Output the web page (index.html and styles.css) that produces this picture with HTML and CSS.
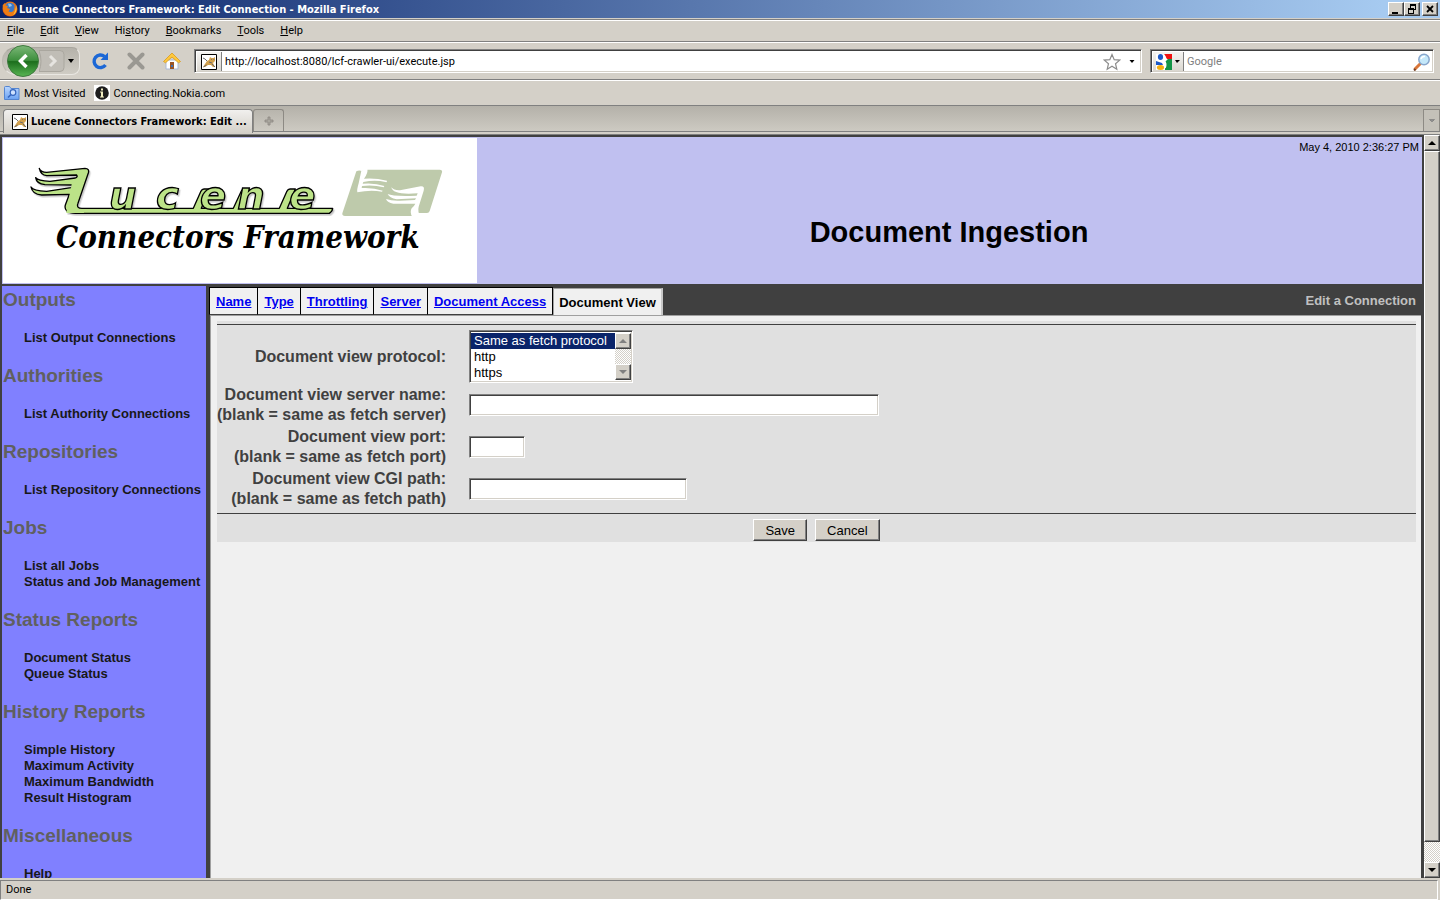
FILE: index.html
```html
<!DOCTYPE html>
<html lang="en">
<head>
<meta charset="utf-8">
<title>Lucene Connectors Framework: Edit Connection</title>
<link rel="stylesheet" href="styles.css">
</head>
<body>
<svg class="defs" aria-hidden="true">
  <defs>
    <linearGradient id="green" x1="0" y1="0" x2="0" y2="1"><stop offset="0" stop-color="#7cb878"/><stop offset=".48" stop-color="#3d8f3d"/><stop offset=".52" stop-color="#1c6e1c"/><stop offset="1" stop-color="#58b553"/></linearGradient>
    <linearGradient id="folder" x1="0" y1="0" x2="0" y2="1"><stop offset="0" stop-color="#b9d6ff"/><stop offset="1" stop-color="#6ba2f2"/></linearGradient>
    <radialGradient id="fox" cx=".5" cy=".4" r=".6"><stop offset="0" stop-color="#ffb52e"/><stop offset="1" stop-color="#d1490a"/></radialGradient>
    <symbol id="cat" viewBox="0 0 16 16">
      <path d="M.5.5h15v15H.5z" fill="#fff" stroke="#000"/>
      <path d="M8 6l1-3 1.500 1h2L14 3v4l-2 2 2 4h-2l-2-2-3 0-3 2H2l2-3 2-3z" fill="#d2a04c"/>
      <path d="M2 4l2 1 2 2M10 5.500h.8M12.500 5.500h.8M8 8l3 1M2.500 13l3-2M11 10l3 3" stroke="#6a6a6a" fill="none"/>
    </symbol>
  </defs>
</svg>

<header class="titlebar">
  <svg class="ico" viewBox="0 0 16 16"><circle cx="8" cy="8" r="7.500" fill="url(#fox)"/><circle cx="8" cy="6.500" r="4.800" fill="#3c78c8"/><path d="M6 2.500l3 .5 1 2-3 1z" fill="#8fc6f0"/><path d="M.8 4l2-2 .5 2.500L6 5 5 7l3 1-1.500 2.500 3 1C12 11 13 8 12.500 5c3 3 2 8-1.500 9.500C6 16.500 0 13 .8 4z" fill="#ee7d14"/><path d="M14 4c1.500 4 .5 8-3 10 2-3 3-6 3-10z" fill="#ffc840"/></svg>
  <span class="title">Lucene Connectors Framework: Edit Connection - Mozilla Firefox</span>
  <div class="winbtns">
    <button class="raised" aria-label="Minimize"><svg viewBox="0 0 12 10"><path d="M2 8h6v2H2z"/></svg></button>
    <button class="raised" aria-label="Restore"><svg viewBox="0 0 12 10"><path d="M4 0h6v2H4zM4 2h1v2H4zM9 2h1v4H9zM8 5h1v1H8zM2 4h6v2H2zM2 6h1v4H2zM7 6h1v4H7zM3 9h4v1H3z"/></svg></button>
    <button class="raised close" aria-label="Close"><svg viewBox="0 0 12 10"><path d="M3 2l6 6M9 2l-6 6" stroke="#000" stroke-width="1.800"/></svg></button>
  </div>
</header>

<nav class="menubar">
  <button><u>F</u>ile</button><button><u>E</u>dit</button><button><u>V</u>iew</button><button>Hi<u>s</u>tory</button><button><u>B</u>ookmarks</button><button><u>T</u>ools</button><button><u>H</u>elp</button>
</nav>

<div class="navbar">
  <div class="pill">
    <button class="back" aria-label="Back"><svg viewBox="0 0 32 32"><circle cx="16" cy="16" r="15.500" fill="url(#green)" stroke="#3f7a3f"/><path d="M19.500 10l-6 6 6 6" fill="none" stroke="#fff" stroke-width="3.500"/></svg></button>
    <button class="fwd" aria-label="Forward"><svg viewBox="0 0 26 24"><path d="M0 1.500h21q4 0 4 4v13q0 4-4 4H0q4-10 0-21z" fill="#c0bdb6" stroke="#aaa79f"/><path d="M11 7l5 5-5 5" fill="none" stroke="#e6e4e0" stroke-width="3"/></svg></button>
    <button class="drop" aria-label="Recent pages"><svg viewBox="0 0 8 4"><path d="M1 0h6L4 4z"/></svg></button>
  </div>
  <button class="tool" aria-label="Reload"><svg viewBox="0 0 18 18"><path d="M14.500 13A6.300 6.300 0 1 1 13.500 4.500" fill="none" stroke="#1b67d6" stroke-width="3.400"/><path d="M9.500 8h7.500V.5z" fill="#1b67d6"/></svg></button>
  <button class="tool" aria-label="Stop"><svg viewBox="0 0 18 18"><path d="M2.500 2.500l13 13M15.500 2.500l-13 13" stroke="#9a9892" stroke-width="4" stroke-linecap="round"/></svg></button>
  <button class="tool" aria-label="Home"><svg viewBox="0 0 18 18"><path d="M3 8h12v9H3z" fill="#fff" stroke="#a9b9d8"/><path d="M7 10h4v7H7z" fill="#9a5526"/><path d="M8 13h2v2H8z" fill="#3a70bb"/><path d="M9 1l8.500 8.500-2 1.300L9 5l-6.500 5.800-2-1.300z" fill="#ffc83c" stroke="#d99a1c" stroke-width=".8"/></svg></button>
  <div class="field url">
    <span class="site"><svg viewBox="0 0 16 16"><use href="#cat"/></svg></span>
    <input type="text" aria-label="Address" value="http://localhost:8080/lcf-crawler-ui/execute.jsp">
    <svg class="star" viewBox="0 0 18 18"><path d="M9 1.500l2.200 5.200 5.500.4-4.200 3.600 1.300 5.500L9 13.300l-4.800 2.900 1.300-5.500L1.300 7.100l5.500-.4z" fill="#fff" stroke="#8c8c8c" stroke-width="1.200"/></svg>
    <button class="caret" aria-label="Show history"><svg viewBox="0 0 6 4"><path d="M.5 0h5L3 3z"/></svg></button>
  </div>
  <div class="field search">
    <button class="engine" aria-label="Search engine"><svg class="g" viewBox="0 0 16 16"><path d="M0 0h16v16H0z" fill="#fff"/><path d="M8 0h8v6l-5-1z" fill="#f01010"/><path d="M16 5v11H9V8l3-3z" fill="#129446"/><ellipse cx="4.500" cy="3" rx="2.600" ry="3" fill="#1b59c8"/><path d="M0 7l6 2 1 2H0z" fill="#1b59c8"/><ellipse cx="4.500" cy="13.500" rx="3.600" ry="2.500" fill="#f5b010"/><path d="M8 1q2 3 0 6 3 2 1 7" fill="none" stroke="#fff" stroke-width="1.500"/></svg><svg class="tri" viewBox="0 0 6 4"><path d="M1 0h5L3 3z"/></svg></button>
    <input type="text" aria-label="Search" placeholder="Google">
    <button class="go" aria-label="Search"><svg viewBox="0 0 18 18"><path d="M1.500 16.500l6-6" stroke="#d9763a" stroke-width="3"/><path d="M1 16l1.500 1.500" stroke="#704028" stroke-width="2"/><circle cx="11" cy="6.500" r="5.200" fill="#c4e8fa" stroke="#88a6cc" stroke-width="1.500"/><path d="M8 6q1-3 4-2.500" stroke="#fff" stroke-width="1.500" fill="none"/></svg></button>
  </div>
</div>

<div class="bookmarks">
  <a href="#"><svg viewBox="0 0 16 16"><path d="M.5 2.500q0-1 1-1h4l1.500 2h8v11H.5z" fill="url(#folder)" stroke="#5585cf"/><circle cx="9" cy="7.500" r="2.800" fill="#cfe2ff" stroke="#3565bd" stroke-width="1.200"/><path d="M7 9.500l-3 3" stroke="#3565bd" stroke-width="1.600"/></svg>Most Visited</a>
  <a href="#"><svg viewBox="0 0 16 16"><path d="M0 0h16v16H0z" fill="#fff"/><circle cx="8" cy="8" r="6.800" fill="#1d1d1d"/><path d="M7 3.500h2v2H7zM6 6.500h3v5h1v1H6v-1h1v-4H6z" fill="#f1eec0"/></svg>Connecting.Nokia.com</a>
</div>

<div class="tabstrip">
  <div class="tab"><svg viewBox="0 0 16 16"><use href="#cat"/></svg><span>Lucene Connectors Framework: Edit ...</span></div>
  <button class="newtab" aria-label="New tab"><svg viewBox="0 0 10 10"><path d="M4 1h2v3h3v2H6v3H4V6H1V4h3z" fill="#aaa79f" stroke="#8a8781" stroke-width=".8"/></svg></button>
  <button class="alltabs" aria-label="List all tabs"><svg viewBox="0 0 6 4"><path d="M0 .5h6M1 1h4L3 3z" fill="#999" stroke="#777" stroke-width=".6"/></svg></button>
</div>

<div class="viewport">
  <div class="page">
    <div class="banner">
      <svg class="logo" viewBox="9 24 1422 435" role="img" aria-label="Lucene Connectors Framework">
        <g class="ribbon">
          <path d="M118 116q4 10 22 11L255 115q14 1 10 14l-31 91q-6 15 12 15H580l22-50q4-8 10-8h16l-24 58h96l24-52q3-6 9-6h14l-24 58H838l22-50q4-8 10-8h16l-24 58H998q0 8-10 15H226q-36-2-30-25l12-32-83 2q-28-2-32-24q6 12 47 13l73-11q9-2 5-8l-83-1q-26-3-28-21q6 10 43 11l76-10q8-3 4-9l-90 2q-18-2-22-22z"/>
          <text class="word"><tspan class="initial" x="196" y="248">L</tspan><tspan y="238" x="327 468 600 712 868">ucene</tspan></text>
        </g>
        <path fill="#becaab" d="M1069 124q8-4 16-1l18-4h216q9 0 7 8l-37 116q-2 6-8 6h-26l-18 9h-202q-9 0-8-8z"/>
        <path fill="#fff" d="M1084 122L1102 116Q1105 128 1092 146Q1125 143 1161 152Q1161 158 1156 156Q1125 149 1090 156L1088 161Q1125 158 1153 168L1151 172Q1120 164 1086 168L1085 174Q1120 172 1148 182L1146 185Q1110 179 1072 187Q1070 180 1076 160Z"/>
        <path fill="#fff" d="M1174 172Q1182 182 1200 181L1262 169Q1275 168 1271 182L1256 230Q1252 246 1262 260L1237 260Q1228 248 1235 235Q1244 226 1246 221L1180 221Q1162 218 1158 207Q1175 213 1200 212L1245 210L1248 205L1190 208Q1168 204 1163 192Q1180 200 1250 197L1253 190Q1178 196 1174 172Z"/>
        <text class="sub" x="168" y="353">Connectors Framework</text>
      </svg>
      <div class="bannertext">
        <time>May 4, 2010 2:36:27 PM</time>
        <h1>Document Ingestion</h1>
      </div>
    </div>
    <div class="columns">
      <nav class="side">
        <h2>Outputs</h2>
        <ul><li><a href="#">List Output Connections</a></li></ul>
        <h2>Authorities</h2>
        <ul><li><a href="#">List Authority Connections</a></li></ul>
        <h2>Repositories</h2>
        <ul><li><a href="#">List Repository Connections</a></li></ul>
        <h2>Jobs</h2>
        <ul><li><a href="#">List all Jobs</a></li><li><a href="#">Status and Job Management</a></li></ul>
        <h2>Status Reports</h2>
        <ul><li><a href="#">Document Status</a></li><li><a href="#">Queue Status</a></li></ul>
        <h2>History Reports</h2>
        <ul><li><a href="#">Simple History</a></li><li><a href="#">Maximum Activity</a></li><li><a href="#">Maximum Bandwidth</a></li><li><a href="#">Result Histogram</a></li></ul>
        <h2>Miscellaneous</h2>
        <ul><li><a href="#">Help</a></li></ul>
      </nav>
      <main>
        <div class="pagetabs">
          <a href="#">Name</a><a href="#">Type</a><a href="#">Throttling</a><a href="#">Server</a><a href="#">Document Access</a><span class="current">Document View</span>
          <span class="heading">Edit a Connection</span>
        </div>
        <form class="body">
          <div class="panel">
            <table>
              <tr><th><label for="proto">Document view protocol:</label></th>
                <td><div class="sunken list"><select id="proto" size="3"><option selected>Same as fetch protocol</option><option>http</option><option>https</option></select>
                  <div class="minibar"><span class="raised"><svg viewBox="0 0 8 4"><path d="M4 0l4 4H0z" fill="#808080"/></svg></span><span class="raised"><svg viewBox="0 0 8 4"><path d="M0 0h8L4 4z" fill="#808080"/></svg></span></div></div></td></tr>
              <tr><th><label for="srv">Document view server name:<br>(blank = same as fetch server)</label></th><td><input class="sunken long" id="srv" type="text"></td></tr>
              <tr><th><label for="port">Document view port:<br>(blank = same as fetch port)</label></th><td><input class="sunken short" id="port" type="text"></td></tr>
              <tr><th><label for="cgi">Document view CGI path:<br>(blank = same as fetch path)</label></th><td><input class="sunken mid" id="cgi" type="text"></td></tr>
            </table>
            <div class="actions"><button type="button" class="raised">Save</button><button type="button" class="raised">Cancel</button></div>
          </div>
        </form>
      </main>
    </div>
  </div>
  <div class="scroll">
    <span class="raised end"><svg viewBox="0 0 8 4"><path d="M4 0l4 4H0z"/></svg></span>
    <span class="raised thumb"></span>
    <span class="track"></span>
    <span class="raised end"><svg viewBox="0 0 8 4"><path d="M0 0h8L4 4z"/></svg></span>
  </div>
</div>

<footer class="status"><span>Done</span></footer>
</body>
</html>
```
FILE: styles.css
```css
* { box-sizing: border-box; }

:root {
  --face: #d4d0c8;
  --dark: #404040;
  --ui: "DejaVu Sans Condensed", "Noto Sans", sans-serif;
}

body {
  margin: 0;
  height: 100vh;
  display: flex;
  flex-direction: column;
  overflow: hidden;
  background: var(--face);
  color: #000;
  font-family: Roboto, "Noto Sans", sans-serif;
  font-size: 11px;
}

button, input, select { font: inherit; color: inherit; margin: 0; padding: 0; border: 0; background: none; }
svg { display: block; flex: none; }
a { color: inherit; text-decoration: none; }
.defs { position: absolute; width: 0; height: 0; }

.raised {
  background: var(--face);
  border: 1px solid;
  border-color: #fff var(--dark) var(--dark) #fff;
  box-shadow: inset -1px -1px #808080;
  display: flex;
  align-items: center;
  justify-content: center;
}

.sunken {
  background: #fff;
  border: 1px solid;
  border-color: #808080 #fff #fff #808080;
  box-shadow: inset 1px 1px var(--dark), inset -1px -1px var(--face);
}

/* window title */
.titlebar {
  flex: none;
  display: flex;
  align-items: center;
  height: 19px;
  padding: 0 2px;
  border-bottom: 1px solid var(--face);
  background: linear-gradient(to right, #0a246a, #a6caf0 96%);
  color: #fff;
}
.titlebar .ico { width: 16px; height: 16px; }
.title { font-family: var(--ui); font-weight: bold; padding-left: 1px; }
.winbtns { display: flex; margin-left: auto; }
.winbtns button { width: 16px; height: 14px; }
.winbtns svg { width: 12px; height: 10px; }
.winbtns .close { margin-left: 2px; }

/* toolbars */
.menubar, .navbar, .bookmarks {
  flex: none;
  display: flex;
  align-items: center;
  border-top: 1px solid #808080;
  box-shadow: inset 0 1px #fff;
}
.menubar { height: 22px; padding-left: 7px; gap: 16px; }
.navbar { height: 38px; padding: 1px 6px 0 2px; }
.bookmarks { height: 26px; padding: 1px 0 0 4px; gap: 8px; }
.bookmarks a { display: flex; align-items: center; gap: 4px; }
.bookmarks svg { width: 16px; height: 16px; }

.pill {
  display: flex;
  align-items: center;
  height: 28px;
  width: 78px;
  padding-left: 4px;
  border: 1px solid #a9a69e;
  border-color: #a9a69e #e9e7e2 #e9e7e2 #b9b6ae;
  border-radius: 14px 8px 8px 14px;
  background: linear-gradient(#b5b2aa, #cfccc4);
}
.back svg { width: 32px; height: 32px; }
.fwd svg { width: 26px; height: 24px; }
.drop svg { width: 8px; height: 4px; margin-left: 2px; }
.tool { width: 36px; display: flex; justify-content: center; }
.tool svg { width: 18px; height: 18px; }
.pill + .tool { margin-left: 2px; }

.field {
  display: flex;
  align-items: stretch;
  height: 24px;
  background: #fff;
  border: 1px solid;
  border-color: #808080 #fff #fff #808080;
  box-shadow: inset 1px 1px var(--dark), inset -1px -1px var(--face);
  padding: 2px 2px 1px;
}
.field input { flex: 1; min-width: 0; padding: 0 0 0 3px; outline: 0; }
.url { flex: 1; margin-left: 4px; }
.search { flex: 0 0 284px; margin-left: 8px; }
.site, .engine {
  display: flex;
  align-items: center;
  justify-content: center;
  background: linear-gradient(#f4f3f1, #dad7d0);
  border-right: 1px solid #808080;
}
.site { width: 25px; }
.engine { width: 31px; gap: 2px; }
.site svg, .engine .g { width: 16px; height: 16px; }
.tri, .caret svg { width: 6px; height: 4px; }
.star { width: 18px; height: 18px; align-self: center; margin-right: 4px; }
.caret { width: 14px; display: flex; align-items: center; justify-content: center; }
.go { display: flex; align-items: center; }
.go svg { width: 18px; height: 18px; }
.search input::placeholder { color: #808080; opacity: 1; }

/* browser tabs */
.tabstrip {
  flex: none;
  display: flex;
  align-items: flex-start;
  height: 30px;
  padding: 3px 0 0 3px;
  border-top: 1px solid #808080;
  background: linear-gradient(#b4b1a9, #cdcac2 25px, #808080 25px, #808080 26px, var(--face) 26px);
  border-bottom: 1px solid #808080;
}
.tab {
  display: flex;
  align-items: center;
  gap: 3px;
  width: 250px;
  height: 24px;
  padding-left: 8px;
  border: 1px solid #808080;
  border-bottom: 0;
  border-radius: 4px 4px 0 0;
  background: linear-gradient(#f1f0ee, var(--face));
  font-family: var(--ui);
  font-weight: bold;
  white-space: nowrap;
}
.tab svg { width: 16px; height: 16px; }
.newtab, .alltabs {
  display: flex;
  align-items: center;
  justify-content: center;
  height: 22px;
  border: 1px solid #8d8a84;
  border-bottom: 0;
}
.newtab { width: 31px; border-radius: 3px 3px 0 0; }
.newtab svg { width: 10px; height: 10px; }
.alltabs { width: 17px; margin-left: auto; background: #c4c1b9; }
.alltabs svg { width: 6px; height: 4px; }

/* page */
.viewport { flex: 1; min-height: 0; display: flex; font-family: "Liberation Sans", Arial, sans-serif; }
.page {
  flex: 1;
  min-width: 0;
  display: flex;
  flex-direction: column;
  padding: 2px 2px 0;
  background: var(--dark);
  overflow: hidden;
}
.banner { flex: none; display: flex; background: #c0c0f0; padding: 1px; }
.logo { width: 474px; height: 145px; background: #fff; }
.ribbon { filter: drop-shadow(4px 5px 0 #c8c8c8); }
.ribbon path { fill: #bce388; stroke: #000; stroke-width: 4; stroke-linejoin: round; }
.word {
  font: italic bold 116px "DejaVu Sans", sans-serif;
  fill: #bce388;
  stroke: #000;
  stroke-width: 4;
}
.initial { font-weight: normal; stroke: none; }
.sub { font: italic bold 93px "DejaVu Serif Condensed", "DejaVu Serif", serif; fill: #000; }
.bannertext { flex: 1; display: flex; flex-direction: column; }
.bannertext time { align-self: flex-end; padding: 3px 2px 0 0; line-height: 13px; }
h1 { margin: 60px 0 0; text-align: center; font-size: 29px; line-height: 36px; }

.columns { flex: 1; min-height: 0; display: flex; padding-top: 1px; gap: 3px; }
.side {
  flex: none;
  width: 204px;
  margin-top: 1px;
  padding: 3px 0 0 1px;
  background: #8080ff;
  overflow: hidden;
  font-weight: bold;
  color: #181818;
}
.side h2 { margin: 0; font-size: 19px; line-height: 22px; color: #606060; }
.side ul { list-style: none; margin: 19px 0; padding: 0 0 0 21px; font-size: 13px; line-height: 16px; white-space: nowrap; }

main { flex: 1; min-width: 0; display: flex; flex-direction: column; padding-top: 2px; font-size: 13px; }
.pagetabs { flex: none; display: flex; height: 28px; font-weight: bold; line-height: 27px; }
.pagetabs a {
  padding: 0 6px;
  background: #f0f0f0;
  border-top: 1px solid #000;
  border-right: 1px solid #000;
  border-bottom: 1px solid var(--dark);
  color: #0000f0;
  text-decoration: underline;
}
.pagetabs a:first-child { border-left: 1px solid #000; }
.current {
  padding: 0 5px;
  margin-top: 1px;
  background: #f0f0f0;
  border: 1px solid #a0a0a0;
  border-right: 2px solid #c8c8c8;
  border-bottom: 0;
}
.heading { margin-left: auto; padding-right: 6px; color: #c0c0c0; }
.body {
  flex: 1;
  margin: 0 1px;
  padding: 5px 5px 0 6px;
  background: #f0f0f0;
  border-top: 1px solid #a0a0a0;
  border-left: 1px solid #a0a0a0;
}
.panel { background: #e0e0e0; padding-top: 3px; }
table {
  width: 100%;
  border-collapse: separate;
  border-spacing: 0 2px;
  border-top: 1px solid var(--dark);
  border-bottom: 1px solid var(--dark);
  padding: 3px 0 2px;
}
th {
  width: 226px;
  padding: 0;
  font-size: 16px;
  line-height: 20px;
  text-align: right;
  white-space: nowrap;
  color: var(--dark);
}
td { padding: 0 0 0 23px; }
td input { display: block; height: 22px; }
td input.sunken { border: 1px solid; border-color: #808080 #fff #fff #808080; background: #fff; padding: 0 4px; }
.long { width: 410px; }
.short { width: 56px; }
.mid { width: 218px; }
.list { display: flex; width: 164px; height: 53px; padding: 2px 1px 2px 1px; }
.list select { flex: 1; min-width: 0; height: 48px; appearance: none; overflow: hidden; outline: 0; border-radius: 0; scrollbar-width: none; }
.list option { height: 16px; min-height: 16px; padding: 0 3px; line-height: 16px; color: #000; }
.list option:checked { background: #0a246a linear-gradient(#0a246a, #0a246a); color: #fff; }
.minibar {
  width: 16px;
  display: flex;
  flex-direction: column;
  justify-content: space-between;
  background: repeating-conic-gradient(#fff 0 25%, var(--face) 0 50%) 0 0 / 2px 2px;
}
.minibar span { height: 16px; }
.minibar svg, .end svg { width: 8px; height: 4px; }
.actions { display: flex; justify-content: center; gap: 8px; padding: 5px 0 1px; }
.actions button.raised { height: 22px; padding: 0 11px; border: 1px solid; border-color: #fff var(--dark) var(--dark) #fff; background: var(--face); }

.scroll { flex: none; width: 16px; display: flex; flex-direction: column; background: var(--face); }
.scroll .end { flex: none; height: 16px; }
.thumb { flex: 691; }
.track { flex: 20; background: repeating-conic-gradient(#fff 0 25%, var(--face) 0 50%) 0 0 / 2px 2px; }

.status { flex: none; height: 22px; padding-top: 2px; }
.status span {
  display: block;
  height: 20px;
  margin-right: 2px;
  padding-left: 5px;
  line-height: 18px;
  border: 1px solid;
  border-color: #808080 #fff #fff #808080;
}
```
